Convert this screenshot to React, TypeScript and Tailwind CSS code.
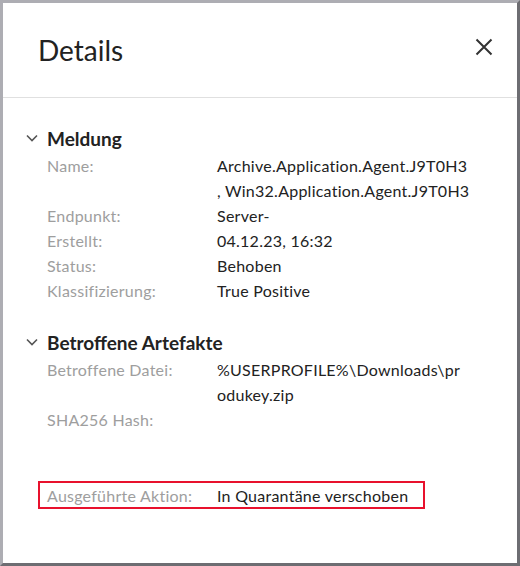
import React from "react";

const Chevron = () => (
  <svg width="14" height="14" viewBox="0 0 14 14" className="shrink-0">
    <path d="M2 4.5 L7 9.5 L12 4.5" fill="none" stroke="#555" strokeWidth="1.6" />
  </svg>
);

const Row = ({ label, lines }: { label: string; lines: string[] }) => (
  <div className="flex">
    <div className="w-[170px] shrink-0 text-[#9e9e9e]">{label}</div>
    <div className="text-[#222]">
      {lines.map((l, i) => (
        <div key={i} className="h-[25px]">{l}</div>
      ))}
    </div>
  </div>
);

export default function App() {
  return (
    <div
      className="w-[520px] h-[566px] box-border border-[3px] border-t-[#adadb3] border-l-[#adadb3] border-r-[#6d6d72] border-b-[#6d6d72] bg-white flex flex-col"
      style={{ fontFamily: "Lato, 'Noto Sans', sans-serif" }}
    >
      <div className="h-[95px] shrink-0 border-b border-[#e0e0e0] flex items-start justify-between pl-[35px] pr-[24px] pt-[30px]">
        <div className="text-[28px] leading-[34px] text-[#222]">Details</div>
        <svg width="18" height="18" viewBox="0 0 18 18" className="mt-[5px]">
          <path d="M1.5 1.5 L16.5 16.5 M16.5 1.5 L1.5 16.5" stroke="#333" strokeWidth="2" />
        </svg>
      </div>
      <div className="pl-[22px] pt-[27px] text-[16px] leading-[25px] tracking-[0.25px]">
        <div className="flex items-center gap-[8px] h-[26px]">
          <Chevron />
          <div className="text-[19px] font-bold text-[#222] tracking-normal">Meldung</div>
        </div>
        <div className="pl-[22px] pt-[2px]">
          <Row label="Name:" lines={["Archive.Application.Agent.J9T0H3", ", Win32.Application.Agent.J9T0H3"]} />
          <Row label="Endpunkt:" lines={["Server-"]} />
          <Row label="Erstellt:" lines={["04.12.23, 16:32"]} />
          <Row label="Status:" lines={["Behoben"]} />
          <Row label="Klassifizierung:" lines={["True Positive"]} />
        </div>
        <div className="flex items-center gap-[8px] h-[26px] mt-[26px]">
          <Chevron />
          <div className="text-[19px] font-bold text-[#222] tracking-normal">Betroffene Artefakte</div>
        </div>
        <div className="pl-[22px] pt-[2px]">
          <Row label="Betroffene Datei:" lines={["%USERPROFILE%\\Downloads\\pr", "odukey.zip"]} />
          <Row label="SHA256 Hash:" lines={[""]} />
        </div>
        <div className="mt-[49px] ml-[13px] w-[387px] h-[28px] border-2 border-[#e8112d] box-border flex items-center pl-[7px]">
          <div className="w-[170px] shrink-0 text-[#9e9e9e]">Ausgeführte Aktion:</div>
          <div className="text-[#222]">In Quarantäne verschoben</div>
        </div>
      </div>
    </div>
  );
}
